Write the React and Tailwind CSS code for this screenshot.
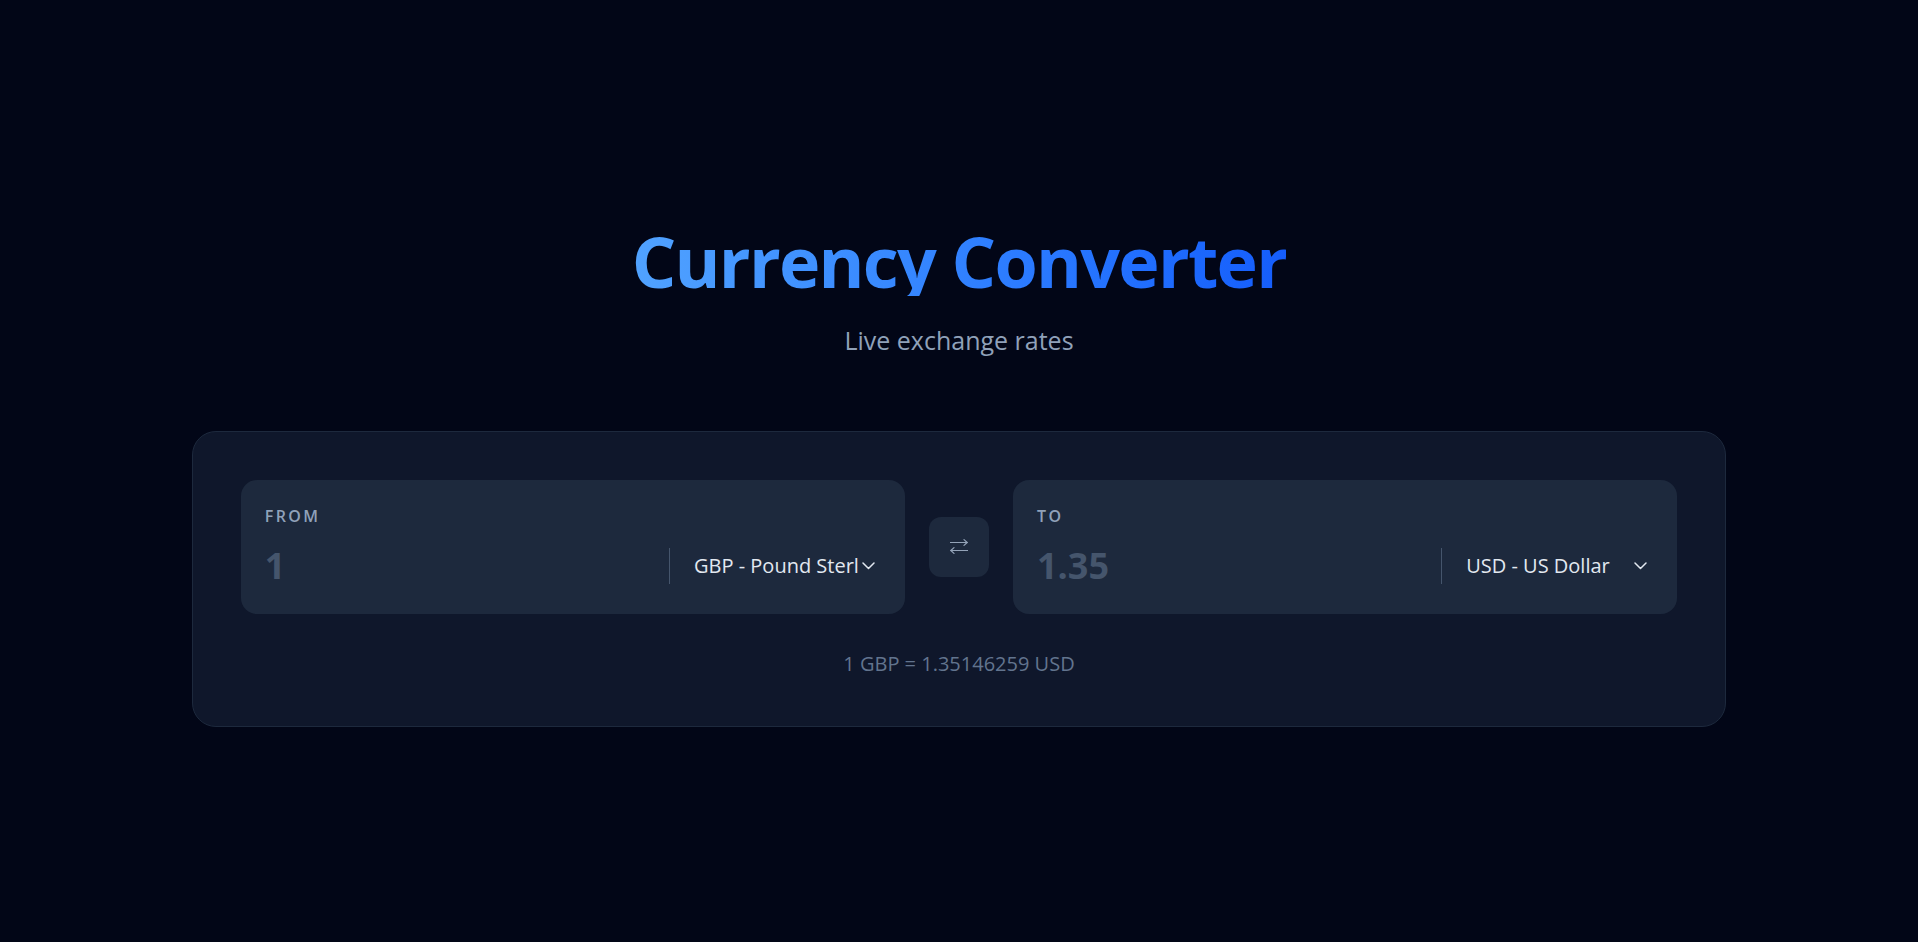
import React from "react";

function Chevron() {
  return (
    <svg width="13" height="8" viewBox="0 0 13 8" fill="none" className="ml-1 mr-1.5 shrink-0">
      <polyline points="1,1 6.5,6.5 12,1" stroke="#e2e8f0" strokeWidth="1.5" strokeLinecap="round" strokeLinejoin="round" />
    </svg>
  );
}

function SwapIcon() {
  return (
    <svg width="18" height="16" viewBox="0 0 18 16" fill="none" stroke="#94a3b8" strokeWidth="1.2" strokeLinecap="round" strokeLinejoin="round">
      <line x1="0.5" y1="3.5" x2="17.2" y2="3.5" />
      <polyline points="14,0.6 17.2,3.5 14,6.4" />
      <line x1="0.8" y1="11.5" x2="17.5" y2="11.5" />
      <polyline points="4,8.6 0.8,11.5 4,14.4" />
    </svg>
  );
}

function CurrencyPanel({ label, amount, currency }) {
  return (
    <div className="flex-1 rounded-2xl bg-slate-800 px-6 py-6">
      <div className="mb-[14px] text-[16px] leading-6 font-semibold tracking-[0.15em] text-slate-400">
        {label}
      </div>
      <div className="flex h-12 items-center">
        <div className="flex-1 text-[36px] font-bold leading-none text-slate-600">{amount}</div>
        <div className="flex h-9 w-[212px] items-center border-l border-slate-600 pl-6">
          <span className="min-w-0 flex-1 overflow-hidden whitespace-nowrap text-[20px] leading-7 text-slate-200">
            {currency}
          </span>
          <Chevron />
        </div>
      </div>
    </div>
  );
}

export default function App() {
  return (
    <div className="flex min-h-screen flex-col items-center justify-center bg-[#020617] pt-[10px] font-['Open_Sans','Noto_Sans',sans-serif]">
      <h1 className="w-fit bg-linear-to-r from-blue-400 to-blue-600 bg-clip-text text-[70px] font-bold leading-none tracking-tight text-transparent">
        Currency Converter
      </h1>
      <p className="mt-7 text-[25px] leading-8 text-slate-400">Live exchange rates</p>
      <div className="mt-[75px] w-4/5 rounded-3xl border border-slate-800 bg-slate-900 p-12">
        <div className="flex items-center gap-6">
          <CurrencyPanel label="FROM" amount="1" currency="GBP - Pound Sterling" />
          <button className="flex h-[60px] w-[60px] shrink-0 items-center justify-center rounded-xl bg-slate-800">
            <SwapIcon />
          </button>
          <CurrencyPanel label="TO" amount="1.35" currency="USD - US Dollar" />
        </div>
        <p className="mt-9 text-center text-[20px] leading-7 text-slate-500">1 GBP = 1.35146259 USD</p>
      </div>
    </div>
  );
}
